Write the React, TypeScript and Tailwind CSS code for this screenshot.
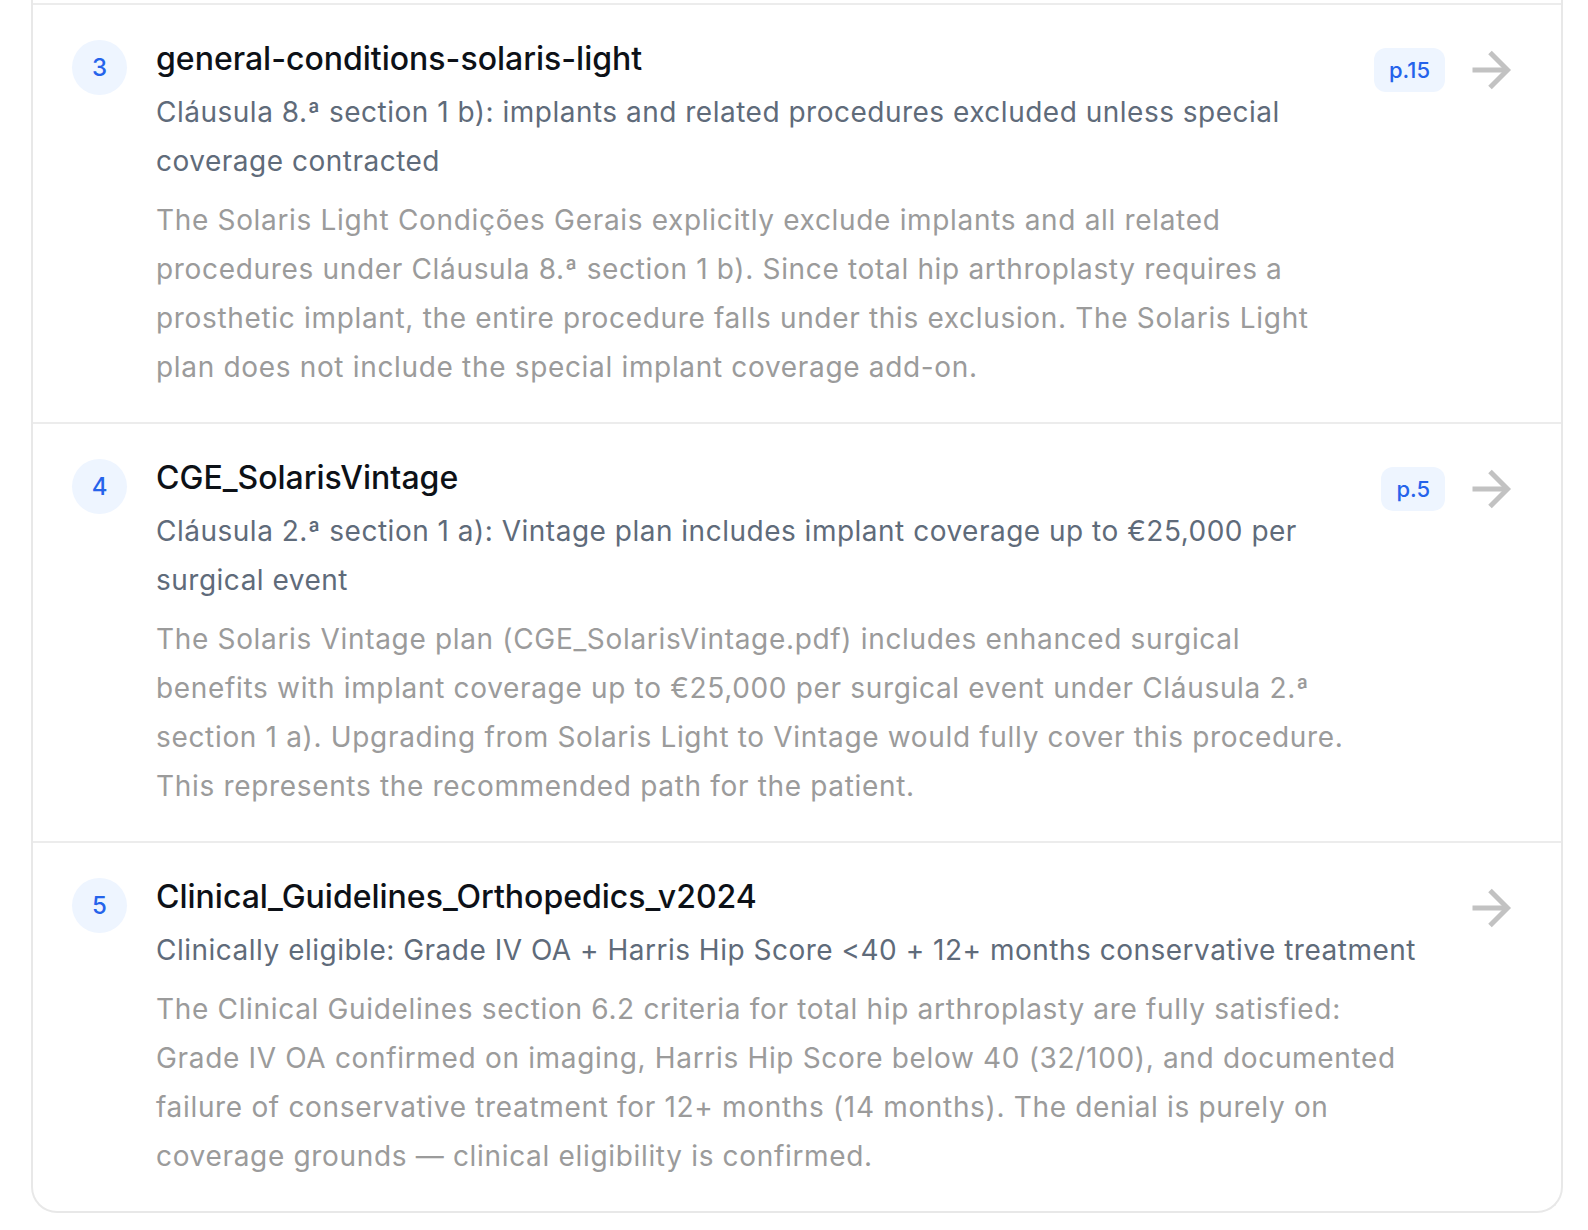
import React from 'react';

interface Source {
  id: number;
  title: string;
  page?: string;
  finding: string;
  detail: string;
}

const sources: Source[] = [
  {
    id: 3,
    title: 'general-conditions-solaris-light',
    page: 'p.15',
    finding:
      'Cláusula 8.ª section 1 b): implants and related procedures excluded unless special coverage contracted',
    detail:
      'The Solaris Light Condições Gerais explicitly exclude implants and all related procedures under Cláusula 8.ª section 1 b). Since total hip arthroplasty requires a prosthetic implant, the entire procedure falls under this exclusion. The Solaris Light plan does not include the special implant coverage add-on.',
  },
  {
    id: 4,
    title: 'CGE_SolarisVintage',
    page: 'p.5',
    finding:
      'Cláusula 2.ª section 1 a): Vintage plan includes implant coverage up to €25,000 per surgical event',
    detail:
      'The Solaris Vintage plan (CGE_SolarisVintage.pdf) includes enhanced surgical benefits with implant coverage up to €25,000 per surgical event under Cláusula 2.ª section 1 a). Upgrading from Solaris Light to Vintage would fully cover this procedure. This represents the recommended path for the patient.',
  },
  {
    id: 5,
    title: 'Clinical_Guidelines_Orthopedics_v2024',
    finding:
      'Clinically eligible: Grade IV OA + Harris Hip Score <40 + 12+ months conservative treatment',
    detail:
      'The Clinical Guidelines section 6.2 criteria for total hip arthroplasty are fully satisfied: Grade IV OA confirmed on imaging, Harris Hip Score below 40 (32/100), and documented failure of conservative treatment for 12+ months (14 months). The denial is purely on coverage grounds — clinical eligibility is confirmed.',
  },
];

const ArrowRight = () => (
  <svg
    width="60"
    height="60"
    viewBox="0 0 24 24"
    fill="none"
    stroke="currentColor"
    strokeWidth="2"
    strokeLinecap="butt"
    strokeLinejoin="miter"
  >
    <path d="M5 12h14" />
    <path d="m12 5 7 7-7 7" />
  </svg>
);

const SourceRow: React.FC<{ source: Source }> = ({ source }) => (
  <div className="flex items-start border-t-2 border-[#ececec] pl-[39px] pr-[41px] pt-[35px] pb-[30px]">
    {/* Index bubble */}
    <div className="mr-[29px] flex h-[55px] w-[55px] shrink-0 items-center justify-center rounded-full bg-[#eef5ff] text-[24px] font-medium text-[#2563eb]">
      {source.id}
    </div>

    {/* Text */}
    <div className="min-w-0 flex-1">
      <div className="text-[32px] font-medium leading-[38px] text-[#0d1117]">{source.title}</div>
      <div className="mt-[10px] text-[28px] leading-[49px] tracking-[0.5px] text-[#5f6b7a]">
        {source.finding}
      </div>
      <div className="mt-[10px] text-[28px] leading-[49px] tracking-[0.67px] text-[#9b9b9b]">
        {source.detail}
      </div>
    </div>

    {/* Page + open */}
    <div className="ml-[36px] flex h-[60px] shrink-0 items-center gap-[15px]">
      {source.page && (
        <span className="rounded-[12px] bg-[#eef5ff] px-[15px] py-[8px] text-[22px] font-medium leading-[28px] text-[#2563eb]">
          {source.page}
        </span>
      )}
      <span className="text-[#c2c2c2]">
        <ArrowRight />
      </span>
    </div>
  </div>
);

export default function App() {
  return (
    <div className="min-h-screen bg-white" style={{ fontFamily: 'Inter, "Noto Sans", sans-serif' }}>
      <div className="ml-[31px] w-[1532px] overflow-hidden rounded-b-[26px] border-x-2 border-b-2 border-[#e8e8e8] bg-white">
        <div className="h-[3px]" />
        {sources.map(s => (
          <SourceRow key={s.id} source={s} />
        ))}
      </div>
    </div>
  );
}
